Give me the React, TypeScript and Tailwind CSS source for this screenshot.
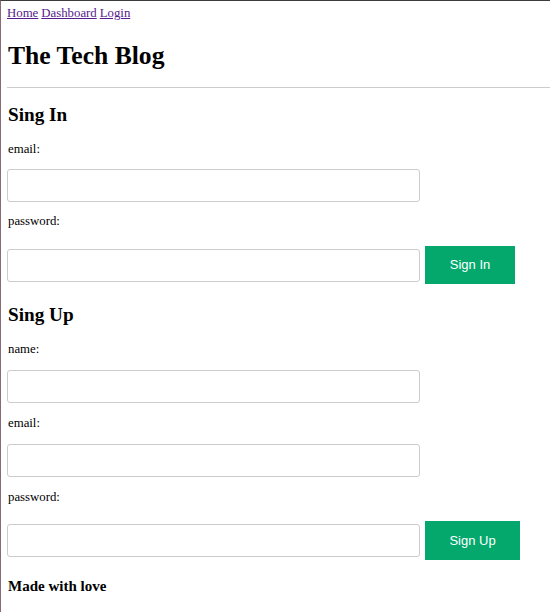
import React from 'react';

const serif = "font-['Liberation_Serif','Times_New_Roman',serif]";

function Field({ label, top }: { label: string; top: string }) {
  return <label className={`block text-[12.8px] leading-[15px] ${top}`}>{label}</label>;
}

function TextInput({ className = '' }: { className?: string }) {
  return (
    <input
      type="text"
      className={`block w-[413px] h-[33px] border border-[#cccccc] rounded-[3px] bg-white outline-none ${className}`}
    />
  );
}

export default function App() {
  return (
    <div className={`${serif} min-h-[612px] border-t border-l border-t-[#3c3c3c] border-l-[#8a6a78] bg-white text-black pl-[6px]`}>
      <nav className="pt-[5px] text-[12.8px] leading-[15px] flex gap-[3px]">
        <a href="#" className="text-[#551a8b] underline">Home</a>
        <a href="#" className="text-[#551a8b] underline">Dashboard</a>
        <a href="#" className="text-[#551a8b] underline">Login</a>
      </nav>
      <h1 className="mt-[20px] pl-[1px] text-[25.6px] leading-[29px] font-bold">The Tech Blog</h1>
      <hr className="mt-[17px] border-0 border-t border-[#cccccc]" />

      <section>
        <h2 className="mt-[16px] pl-[1px] text-[19.2px] leading-[22px] font-bold">Sing In</h2>
        <Field label="email:" top="mt-[16px] pl-[1px]" />
        <TextInput className="mt-[12px]" />
        <Field label="password:" top="mt-[12px] pl-[1px]" />
        <div className="mt-[17px] flex items-center gap-[5px]">
          <TextInput />
          <button className="w-[90px] h-[38px] bg-[#04a86d] text-white text-[13px] font-['Liberation_Sans',Arial,sans-serif]">
            Sign In
          </button>
        </div>
      </section>

      <section>
        <h2 className="mt-[20px] pl-[1px] text-[19.2px] leading-[22px] font-bold">Sing Up</h2>
        <Field label="name:" top="mt-[16px] pl-[1px]" />
        <TextInput className="mt-[13px]" />
        <Field label="email:" top="mt-[13px] pl-[1px]" />
        <TextInput className="mt-[13px]" />
        <Field label="password:" top="mt-[13px] pl-[1px]" />
        <div className="mt-[16px] flex items-center gap-[5px]">
          <TextInput />
          <button className="w-[95px] h-[39px] bg-[#04a86d] text-white text-[13px] font-['Liberation_Sans',Arial,sans-serif]">
            Sign Up
          </button>
        </div>
      </section>

      <footer className="mt-[17px] pl-[1px] text-[15px] leading-[18px] font-bold">Made with love</footer>
    </div>
  );
}
